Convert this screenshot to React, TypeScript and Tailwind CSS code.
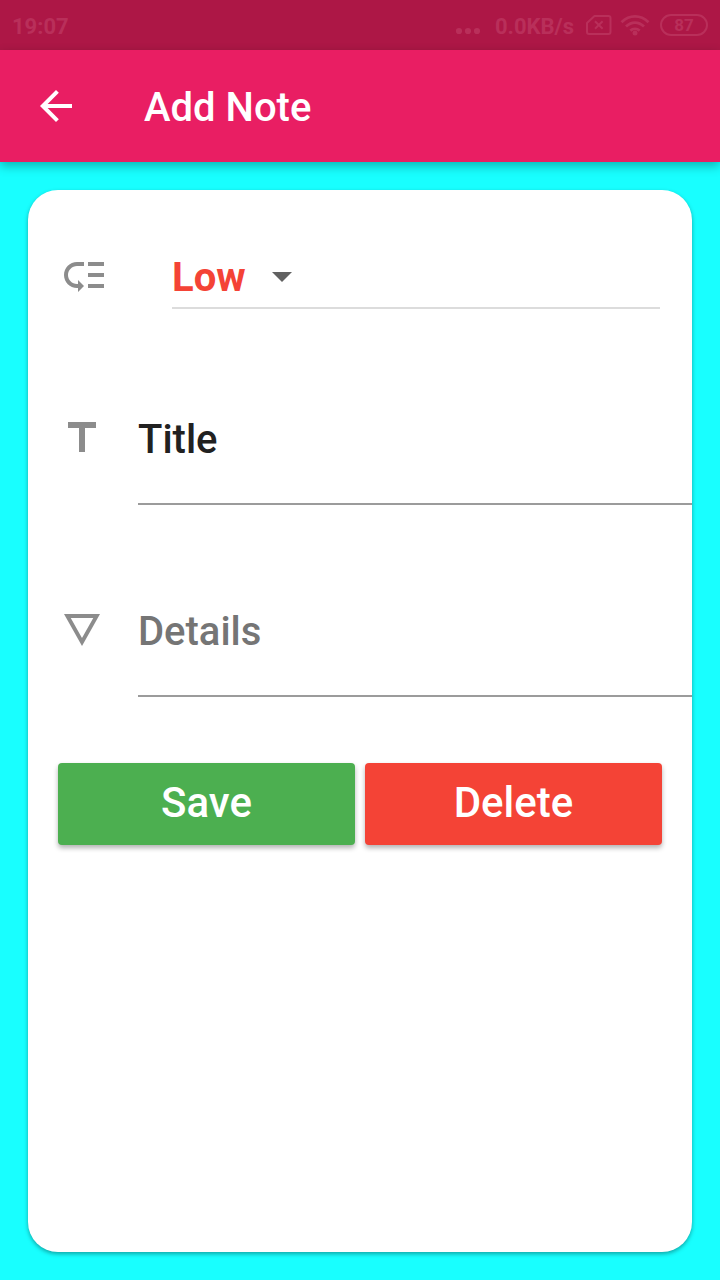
import { useState, type ReactNode } from "react";

function Icon({ d, className = "" }: { d: string; className?: string }) {
  return (
    <svg viewBox="0 0 24 24" fill="currentColor" aria-hidden="true" className={`size-12 shrink-0 ${className}`}>
      <path d={d} />
    </svg>
  );
}

const icons = {
  back: "M20 11H7.83l5.59-5.59L12 4l-8 8 8 8 1.41-1.41L7.83 13H20v-2z",
  priority:
    "M14 5h8v2h-8zm0 5.5h8v2h-8zm0 5.5h8v2h-8zM2 11.5C2 15.08 4.92 18 8.5 18H9v2l3-3-3-3v2h-.5C6.02 16 4 13.98 4 11.5S6.02 7 8.5 7H12V5H8.5C4.92 5 2 7.92 2 11.5z",
  title: "M5 4v3h5.5v12h3V7H19V4z",
  details: "M3 4l9 16 9-16H3zm3.38 2h11.25L12 16 6.38 6z",
  dropDown: "M7 10l5 5 5-5z",
};

function StatusBar() {
  return (
    <div className="flex h-[50px] items-center bg-[#ad1746] px-3 text-[22px] font-bold text-[#b92f5a]">
      <span className="pt-0.5">19:07</span>
      <div className="ml-auto flex items-center">
        <svg viewBox="0 0 26 10" fill="currentColor" aria-hidden="true" className="mt-3.5 mr-3.5 h-2.5 w-[26px]">
          <circle cx="4" cy="4" r="3.1" />
          <circle cx="13" cy="4" r="3.1" />
          <circle cx="22" cy="4" r="3.1" />
        </svg>
        <span className="pt-0.5">0.0KB/s</span>
        <svg viewBox="0 0 26 20" fill="none" stroke="currentColor" strokeWidth="2" aria-hidden="true" className="ml-3 h-5 w-[26px]">
          <path d="M8.500 1H22.500a2 2 0 0 1 2 2V17a2 2 0 0 1-2 2H3a2 2 0 0 1-2-2V8z" strokeLinejoin="round" />
          <path d="M9 6.200l7.600 7.600M16.600 6.200L9 13.800" />
        </svg>
        <svg viewBox="0 0 30 22" fill="none" stroke="currentColor" strokeWidth="2.800" aria-hidden="true" className="ml-2 h-[22px] w-[30px]">
          <path d="M1.500 8.200C9.500 .5 20.500 .5 28.500 8.200" />
          <path d="M6 12.600C11.500 7.300 18.500 7.300 24 12.600" />
          <path d="M10.300 16.600C13 14.200 17 14.200 19.700 16.600" />
          <circle cx="15" cy="19" r="2.500" fill="currentColor" stroke="none" />
        </svg>
        <span className="ml-2.5 flex h-[22px] w-12 items-center justify-center rounded-full border-2 border-current text-[17px] leading-4">
          87
        </span>
      </div>
    </div>
  );
}

function Field({ icon, children }: { icon: string; children: ReactNode }) {
  return (
    <div className="flex items-start gap-8 pl-[30px]">
      <Icon d={icon} className="text-[#8c8c8c]" />
      {children}
    </div>
  );
}

const inputStyle =
  "h-[91px] min-w-0 flex-1 border-b-2 border-[#9b9b9b] bg-transparent pb-[38px] text-[40px] leading-12 font-medium text-[#212121] outline-none placeholder:text-[#757575]";
const buttonStyle = "h-[82px] flex-1 rounded-sm pb-1 text-[42px] font-medium text-white shadow-[0_3px_5px_rgba(0,0,0,0.3)]";

export default function App() {
  const [priority, setPriority] = useState("Low");
  const [title, setTitle] = useState("Title");
  const [details, setDetails] = useState("");

  return (
    <div className="flex min-h-screen flex-col bg-[#18ffff] font-[Roboto,sans-serif]">
      <StatusBar />
      <header className="flex h-28 items-center gap-16 bg-[#e91e63] px-8 text-white shadow-[0_4px_10px_rgba(0,0,0,0.3)]">
        <button type="button" aria-label="Back">
          <Icon d={icons.back} />
        </button>
        <h1 className="pt-1 text-[40px] font-medium">Add Note</h1>
      </header>
      <main className="flex flex-1 flex-col p-7">
        <form
          onSubmit={(event) => event.preventDefault()}
          className="flex-1 overflow-hidden rounded-[30px] bg-white pt-[62px] pb-8 shadow-[0_2px_4px_rgba(0,0,0,0.35)]"
        >
          <div className="flex items-start gap-16 px-8">
            <Icon d={icons.priority} className="text-[#8c8c8c]" />
            <div className="flex flex-1 border-b-2 border-[#dcdcdc] pb-[7px]">
              <div className="grid items-center">
                <select
                  aria-label="Priority"
                  value={priority}
                  onChange={(event) => setPriority(event.target.value)}
                  className="col-start-1 row-start-1 field-sizing-content h-12 appearance-none bg-transparent pt-0.5 pr-[60px] text-[40px] leading-12 font-bold text-[#f44336] outline-none"
                >
                  <option>Low</option>
                  <option>High</option>
                </select>
                <Icon d={icons.dropDown} className="pointer-events-none col-start-1 row-start-1 justify-self-end text-[#616161]" />
              </div>
            </div>
          </div>
          <div className="mt-[105px] flex flex-col gap-[101px]">
            <Field icon={icons.title}>
              <input aria-label="Title" value={title} onChange={(event) => setTitle(event.target.value)} className={inputStyle} />
            </Field>
            <Field icon={icons.details}>
              <input
                aria-label="Details"
                placeholder="Details"
                value={details}
                onChange={(event) => setDetails(event.target.value)}
                className={inputStyle}
              />
            </Field>
          </div>
          <div className="mt-[66px] flex gap-2.5 px-[30px]">
            <button type="submit" className={`${buttonStyle} bg-[#4caf50]`}>
              Save
            </button>
            <button type="button" className={`${buttonStyle} bg-[#f44336]`}>
              Delete
            </button>
          </div>
        </form>
      </main>
    </div>
  );
}
